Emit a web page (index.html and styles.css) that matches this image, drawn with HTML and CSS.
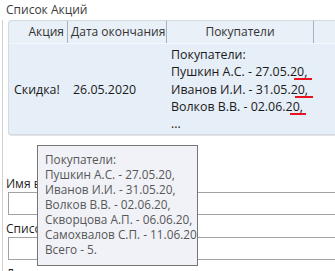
FILE: index.html
```html
<!DOCTYPE html>
<html>
<head>
    <meta charset="utf-8">
    <title>Список Акций</title>
    <link rel="stylesheet" href="styles.css">
</head>
<body>
    <div class="section-title">Список Акций</div>

    <div class="content">
        <!-- таблица акций -->
        <div class="grid">
            <div class="grid-head">
                <div class="head-cell col-name head-name">Акция</div>
                <div class="head-cell col-date">Дата окончания</div>
                <div class="head-cell col-buyers head-buyers">Покупатели</div>
                <div class="head-rest"></div>
            </div>
            <div class="grid-row">
                <div class="cell col-name">Скидка!</div>
                <div class="cell col-date">26.05.2020</div>
                <div class="cell col-buyers cell-buyers">
                    <div>Покупатели:</div>
                    <div>Пушкин А.С. - 27.05.2<span class="typo">0,</span></div>
                    <div>Иванов И.И. - 31.05.2<span class="typo">0,</span></div>
                    <div>Волков В.В. - 02.06.2<span class="typo typo-short">0,</span></div>
                    <div>...</div>
                </div>
            </div>
        </div>

        <!-- поля формы -->
        <div class="field-label first">Имя в</div>
        <input class="textbox" type="text">
        <div class="field-label">Списо</div>
        <input class="textbox" type="text">
        <div class="field-label">Дата</div>
    </div>

    <!-- всплывающая подсказка -->
    <div class="tooltip">
        <div>Покупатели:</div>
        <div>Пушкин А.С. - 27.05.20,</div>
        <div>Иванов И.И. - 31.05.20,</div>
        <div>Волков В.В. - 02.06.20,</div>
        <div>Скворцова А.П. - 06.06.20,</div>
        <div>Самохвалов С.П. - 11.06.20</div>
        <div>Всего - 5.</div>
    </div>
</body>
</html>
```

FILE: styles.css
```css
/* базовые стили */
html, body {
    margin: 0;
    overflow: hidden;
}
body {
    position: relative;
    width: 335px;
    height: 271px;
    font-family: "Open Sans", "Noto Sans", sans-serif;
    font-size: 12px;
    color: #1e1e1e;
    background: #fff;
}
.section-title {
    height: 20px;
    line-height: 20px;
    padding-left: 6px;
    color: #3c3c3c;
}
.content {
    width: 400px;
    height: 251px;
    margin-left: 2px;
    padding-left: 3px;
    border-left: 1px solid #cfcfcf;
}

/* таблица */
.grid {
    margin-left: 2px;
    border: 1px solid #d3dae2;
    border-right: none;
    border-radius: 4px 0 0 4px;
    background: #e6eef7;
    box-shadow: 0 1px 0 #e4e4e4;
}
.grid-head {
    display: flex;
    align-items: stretch;
    height: 22px;
    border-bottom: 1px solid #f6f9fc;
    background: #e9f0f7;
    border-radius: 4px 0 0 0;
    color: #333;
}
.head-cell {
    box-sizing: border-box;
    line-height: 22px;
    border-right: 1px solid #a9b2bc;
    white-space: nowrap;
}
.head-rest {
    flex: 1;
}
.col-name {
    width: 59px;
    flex: none;
    box-sizing: border-box;
}
.col-date {
    width: 99px;
    flex: none;
    box-sizing: border-box;
}
.col-buyers {
    width: 147px;
    flex: none;
    box-sizing: border-box;
}
.head-name {
    text-align: right;
    padding-right: 3px;
}
.col-date.head-cell {
    padding-left: 3px;
}
.head-buyers {
    text-align: center;
}

.grid-row {
    display: flex;
    align-items: center;
    height: 90px;
    font-size: 12.4px;
    color: #1a1a1a;
}
.cell {
    white-space: nowrap;
}
.cell.col-name {
    padding-left: 5px;
}
.cell.col-date {
    padding-left: 5px;
}
.cell-buyers {
    align-self: flex-start;
    padding: 2px 0 0 4px;
    line-height: 17.3px;
}

/* красное подчёркивание */
.typo {
    position: relative;
}
.typo::after {
    content: "";
    position: absolute;
    left: -3px;
    right: -5px;
    bottom: 0;
    height: 2px;
    background: #e8141e;
}
.typo-short::after {
    right: -3px;
}

/* поля формы */
.field-label {
    height: 16px;
    line-height: 16px;
    margin-top: 6px;
    color: #1e1e1e;
    white-space: nowrap;
}
.field-label.first {
    margin-top: 41px;
}
.textbox {
    display: block;
    box-sizing: border-box;
    width: 395px;
    height: 23px;
    margin: 0 0 0 2px;
    border: 1px solid #a2a2a2;
    background: #fff;
}

/* подсказка */
.tooltip {
    position: absolute;
    left: 37px;
    top: 145px;
    box-sizing: border-box;
    width: 161px;
    height: 121px;
    padding: 6px 0 0 7px;
    border: 1px solid #767676;
    background: #f1f2f7;
    color: #575757;
    font-size: 11.8px;
    line-height: 15px;
    white-space: nowrap;
    overflow: hidden;
}
```
